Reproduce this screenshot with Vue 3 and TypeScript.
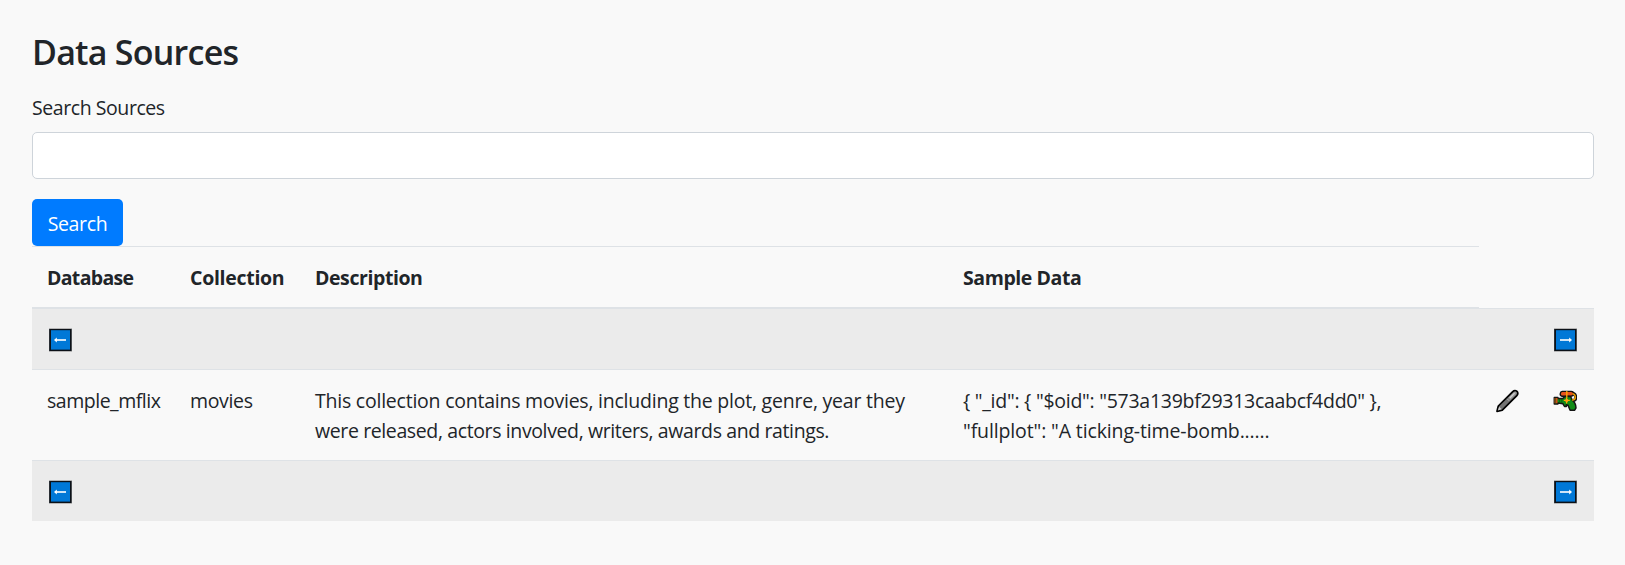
<script setup lang="ts">
import { ref } from 'vue'

interface Source {
  database: string
  collection: string
  description: string[]
  sample: string[]
}

const query = ref('')
const sources: Source[] = [
  {
    database: 'sample_mflix',
    collection: 'movies',
    description: [
      'This collection contains movies, including the plot, genre, year they',
      'were released, actors involved, writers, awards and ratings.',
    ],
    sample: [
      '{ "_id": { "$oid": "573a139bf29313caabcf4dd0" },',
      '"fullplot": "A ticking-time-bomb......',
    ],
  },
]
</script>

<template>
  <main class="page">
    <h2 class="title">Data Sources</h2>
    <form @submit.prevent>
      <label class="label" for="search">Search Sources</label>
      <input id="search" v-model="query" class="input" type="text" />
      <button class="btn" type="submit">Search</button>
    </form>

    <table class="table">
      <colgroup>
        <col class="c1" /><col class="c2" /><col class="c3" /><col class="c4" /><col class="c5" /><col class="c6" />
      </colgroup>
      <thead>
        <tr>
          <th class="h1">Database</th>
          <th class="h2">Collection</th>
          <th class="h3">Description</th>
          <th class="h4">Sample Data</th>
          <td></td>
          <td></td>
        </tr>
      </thead>
      <tbody>
        <tr class="pager">
          <td colspan="5">
            <svg class="icon" viewBox="0 0 24 24">
              <rect x="1" y="0.2" width="23" height="23.6" fill="#000" opacity="0.28" />
              <rect x="1.2" y="1" width="22.4" height="22" fill="#0b1118" />
              <rect x="3" y="2.2" width="19" height="19.4" fill="#0078d7" />
              <path d="M7 11h11v2H7z" fill="#cde4f7" />
              <path d="M6 12 8.8 9.5v5z" fill="#fff" />
            </svg>
          </td>
          <td>
            <svg class="icon" viewBox="0 0 24 24">
              <rect x="1" y="0.2" width="23" height="23.6" fill="#000" opacity="0.28" />
              <rect x="1.2" y="1" width="22.4" height="22" fill="#0b1118" />
              <rect x="3" y="2.2" width="19" height="19.4" fill="#0078d7" />
              <path d="M7 11h10v2H7z" fill="#cde4f7" />
              <path d="M19 12 16.2 9.5v5z" fill="#fff" />
            </svg>
          </td>
        </tr>
        <tr v-for="s in sources" :key="s.collection" class="row">
          <td class="db">{{ s.database }}</td>
          <td class="coll">{{ s.collection }}</td>
          <td>
            <div v-for="(line, i) in s.description" :key="i" :class="'desc' + i">{{ line }}</div>
          </td>
          <td>
            <div v-for="(line, i) in s.sample" :key="i" :class="'sample' + i">{{ line }}</div>
          </td>
          <td>
            <svg class="icon" viewBox="0 0 24 24">
              <path d="M2 22.3 3.3 17 17.5 2.8Q19.8.6 22 2.4q1.8 2.2-.4 4.5L7.3 21.1z" fill="#747474" stroke="#000" stroke-width="1.7" stroke-linejoin="round" />
              <path d="M2.8 21.6 4.1 17.7 6.7 20.3z" fill="#c8c8c8" />
              <path d="m13 9 6-6q1.5-1 2.3 0 .9 1-.2 2.4L15.3 11z" fill="#999" />
              <path d="m14.8 9 4.8-4.8" stroke="#d0d0d0" stroke-width="1.2" />
              <path d="m12.2 9.8 2 2" stroke="#ccc" stroke-width=".8" />
            </svg>
          </td>
          <td>
            <svg class="icon" viewBox="0 0 24 24">
              <path d="M19 4.3q3.8.3 3.8 4.2 0 3-3.8 3.2" fill="none" stroke="#111" stroke-width="3" />
              <path d="M9.2 2.4h9q2.4.1 2.4 2.4T18 7.2H9.4Q7.2 7 7.2 4.9t2-2.5z" fill="#e7541c" stroke="#111" stroke-width="1.4" />
              <path d="M1.3 8.6h3.6v.8h5L12 7.5h5.5l1.8 3.7q3.6 3 3.7 7.7l-1.3 2.3h-4.6L15 16.2l-1.7-.5v1.8h-1.8l-1.5-2.7-5.1-.7v.8H1.3z" fill="#128c17" stroke="#151515" stroke-width="1.5" stroke-linejoin="round" />
              <path d="M1.4 9h3.1v5.2H1.4z" fill="#d34c19" />
              <path d="M2.2 9v5.2M6.5 10v4.1M8.8 10v4" stroke="#095510" stroke-width=".7" />
              <path d="M19.5 4.6q2.9.5 2.8 3.8 0 2.5-3.3 2.7" fill="none" stroke="#f6a500" stroke-width="1.4" />
              <path d="M13.8 2v7M10.8 11.4h6M13.6 9v5.4" stroke="#ffad00" stroke-width="1.3" />
              <circle cx="13.7" cy="11.4" r="1.6" fill="#ff9c16" />
            </svg>
          </td>
        </tr>
        <tr class="pager last">
          <td colspan="5">
            <svg class="icon" viewBox="0 0 24 24">
              <rect x="1" y="0.2" width="23" height="23.6" fill="#000" opacity="0.28" />
              <rect x="1.2" y="1" width="22.4" height="22" fill="#0b1118" />
              <rect x="3" y="2.2" width="19" height="19.4" fill="#0078d7" />
              <path d="M7 11h11v2H7z" fill="#cde4f7" />
              <path d="M6 12 8.8 9.5v5z" fill="#fff" />
            </svg>
          </td>
          <td>
            <svg class="icon" viewBox="0 0 24 24">
              <rect x="1" y="0.2" width="23" height="23.6" fill="#000" opacity="0.28" />
              <rect x="1.2" y="1" width="22.4" height="22" fill="#0b1118" />
              <rect x="3" y="2.2" width="19" height="19.4" fill="#0078d7" />
              <path d="M7 11h10v2H7z" fill="#cde4f7" />
              <path d="M19 12 16.2 9.5v5z" fill="#fff" />
            </svg>
          </td>
        </tr>
      </tbody>
    </table>
  </main>
</template>

<style>
body {
  margin: 0;
  background: #f9f9f9;
}
</style>

<style scoped>
.page {
  box-sizing: border-box;
  width: 1625px;
  height: 565px;
  padding: 31px 31px 0 32px;
  font: 400 19.5px/30px "Open Sans", "Noto Sans", sans-serif;
  color: #212529;
  background: #f9f9f9;
  white-space: nowrap;
}
.title {
  margin: 0 0 20px;
  font-size: 34px;
  line-height: 42px;
  font-weight: 600;
  letter-spacing: -0.76px;
}
.label {
  display: block;
  margin: 0 0 9px;
  letter-spacing: -0.43px;
}
.input {
  display: block;
  box-sizing: border-box;
  width: 100%;
  height: 47px;
  margin: 0 0 20px;
  padding: 7px 15px;
  border: 1px solid #ced4da;
  border-radius: 5px;
  background: #fff;
  font: inherit;
  color: #495057;
  outline: none;
}
.btn {
  display: block;
  box-sizing: border-box;
  width: 91px;
  height: 47px;
  padding: 2px 0 0;
  border: 0;
  border-radius: 5px;
  background: #007bff;
  color: #fff;
  font: inherit;
  letter-spacing: -0.35px;
}
.table {
  width: 1562px;
  table-layout: fixed;
  border-collapse: separate;
  border-spacing: 0;
}
.c1 { width: 143px; }
.c2 { width: 125px; }
.c3 { width: 648px; }
.c4 { width: 531px; }
.c5 { width: 58px; }
.c6 { width: 57px; }
th,
td {
  padding: 16px 0 14px 15px;
  text-align: left;
  vertical-align: top;
  border-bottom: 1px solid #dee2e6;
}
thead td {
  vertical-align: bottom;
}
th {
  font-weight: 700;
  border-top: 1px solid #dee2e6;
  border-bottom-width: 2px;
}
.pager td {
  background: #ebebeb;
}
.last td {
  border-bottom: 0;
}
.h1 { letter-spacing: -0.67px; }
.h2 { letter-spacing: -0.29px; }
.h3 { letter-spacing: -0.42px; }
.h4 { letter-spacing: -0.42px; }
.db { letter-spacing: -0.48px; }
.coll { letter-spacing: -0.35px; }
.desc0 { letter-spacing: -0.23px; }
.desc1 { letter-spacing: -0.38px; }
.sample0 { letter-spacing: -0.27px; }
.sample1 { letter-spacing: -0.13px; }
.icon {
  display: block;
  width: 24px;
  height: 24px;
  margin: 3px 0 3px 1px;
}
</style>
